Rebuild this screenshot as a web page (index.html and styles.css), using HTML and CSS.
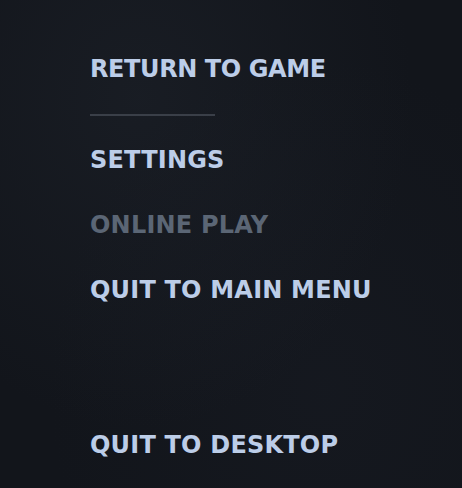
FILE: index.html
```html
<!DOCTYPE html>
<html lang="en">
<head>
<meta charset="utf-8">
<title>Paused</title>
<link rel="stylesheet" href="styles.css">
</head>
<body>
  <nav class="pause-menu">
    <button class="menu-item menu-item--primary">RETURN TO GAME</button>
    <hr class="menu-divider">
    <button class="menu-item">SETTINGS</button>
    <button class="menu-item is-disabled" disabled>ONLINE PLAY</button>
    <button class="menu-item">QUIT TO MAIN MENU</button>
    <button class="menu-item menu-item--bottom">QUIT TO DESKTOP</button>
  </nav>
</body>
</html>
```

FILE: styles.css
```css
html, body {
  margin: 0;
  height: 100%;
}

body {
  background:
    radial-gradient(ellipse at 30% 20%, rgba(40, 46, 56, 0.3), transparent 60%),
    radial-gradient(ellipse at 70% 80%, rgba(30, 34, 44, 0.25), transparent 60%),
    #12151b;
  overflow: hidden;
}

.pause-menu {
  display: flex;
  flex-direction: column;
  align-items: flex-start;
  padding: 57px 0 0 90px;
}

.menu-item {
  background: none;
  border: 0;
  padding: 0;
  margin: 0;
  font-family: "DejaVu Sans", sans-serif;
  font-weight: 700;
  font-size: 24px;
  line-height: 24px;
  letter-spacing: 0.2px;
  color: #bccde8;
  cursor: pointer;
  text-align: left;
  white-space: nowrap;
}

.menu-item--primary {
  letter-spacing: -0.4px;
}

.menu-item + .menu-item {
  margin-top: 41px;
}

.menu-item.is-disabled {
  color: #5b6675;
  cursor: default;
}

.menu-divider {
  width: 125px;
  height: 2px;
  border: 0;
  margin: 33px 0 32px;
  background: #3a3f48;
}

.menu-item--bottom {
  margin-top: 131px !important;
}
```
